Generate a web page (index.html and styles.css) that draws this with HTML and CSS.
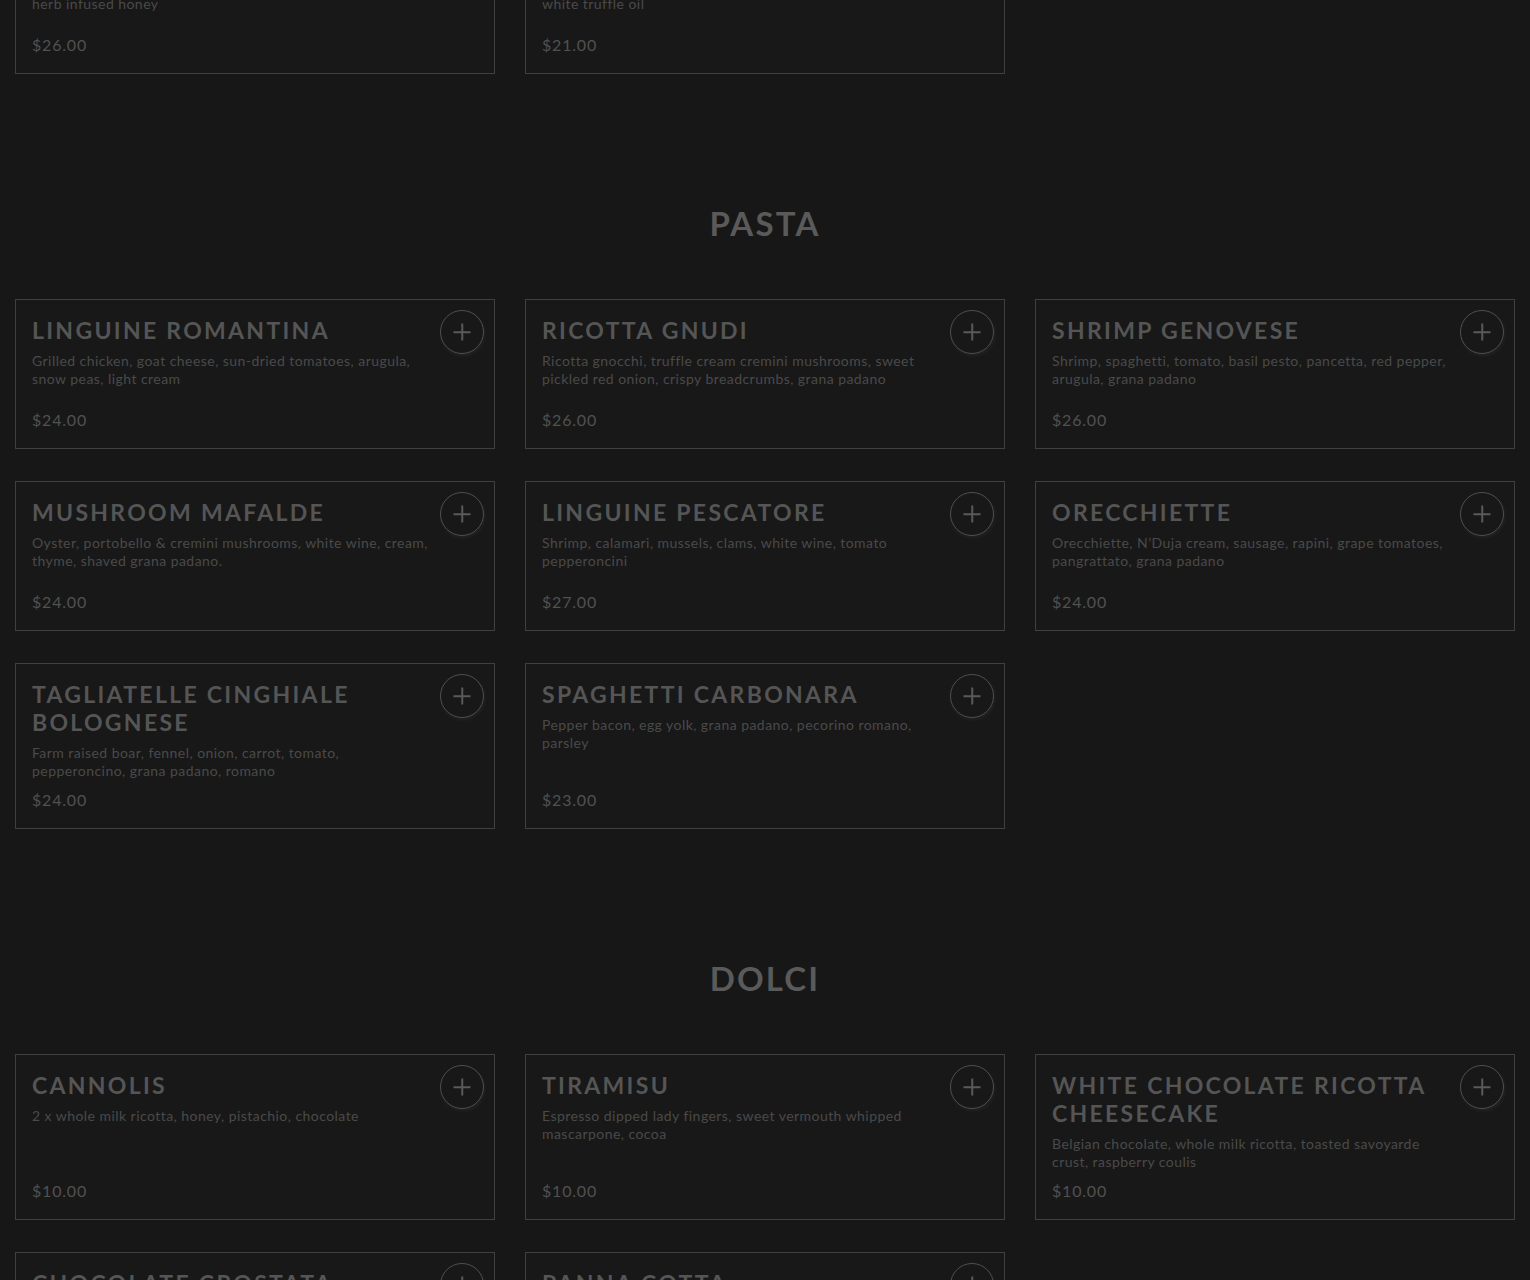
FILE: index.html
```html
<!DOCTYPE html>
<html>

<head>
    <meta charset="UTF-8">
    <title>Menu</title>
    <link rel="stylesheet" href="styles.css">
</head>

<body>
    <main class="menu">
        <!-- previous course, scrolled mostly out of view -->
        <section class="course course-cut">
            <div class="dish-grid">
                <div class="dish">
                    <div class="dish-body">
                        <h3 class="dish-name">Whipped Ricotta</h3>
                        <p class="dish-desc">Whipped ricotta, prosciutto, grilled sourdough,<br>herb infused honey</p>
                        <p class="dish-price">$26.00</p>
                    </div>
                    <button class="dish-add" aria-label="Add"></button>
                </div>
                <div class="dish">
                    <div class="dish-body">
                        <h3 class="dish-name">Truffle Fries</h3>
                        <p class="dish-desc">Hand cut fries, grana padano, parsley, aioli,<br>white truffle oil</p>
                        <p class="dish-price">$21.00</p>
                    </div>
                    <button class="dish-add" aria-label="Add"></button>
                </div>
            </div>
        </section>

        <section class="course">
            <h2 class="course-title">Pasta</h2>
            <div class="dish-grid">
                <div class="dish">
                    <div class="dish-body">
                        <h3 class="dish-name">Linguine Romantina</h3>
                        <p class="dish-desc">Grilled chicken, goat cheese, sun-dried tomatoes, arugula, snow peas, light cream</p>
                        <p class="dish-price">$24.00</p>
                    </div>
                    <button class="dish-add" aria-label="Add"></button>
                </div>
                <div class="dish">
                    <div class="dish-body">
                        <h3 class="dish-name">Ricotta Gnudi</h3>
                        <p class="dish-desc">Ricotta gnocchi, truffle cream cremini mushrooms, sweet pickled red onion, crispy breadcrumbs, grana padano</p>
                        <p class="dish-price">$26.00</p>
                    </div>
                    <button class="dish-add" aria-label="Add"></button>
                </div>
                <div class="dish">
                    <div class="dish-body">
                        <h3 class="dish-name">Shrimp Genovese</h3>
                        <p class="dish-desc">Shrimp, spaghetti, tomato, basil pesto, pancetta, red pepper, arugula, grana padano</p>
                        <p class="dish-price">$26.00</p>
                    </div>
                    <button class="dish-add" aria-label="Add"></button>
                </div>
                <div class="dish">
                    <div class="dish-body">
                        <h3 class="dish-name">Mushroom Mafalde</h3>
                        <p class="dish-desc">Oyster, portobello &amp; cremini mushrooms, white wine, cream, thyme, shaved grana padano.</p>
                        <p class="dish-price">$24.00</p>
                    </div>
                    <button class="dish-add" aria-label="Add"></button>
                </div>
                <div class="dish">
                    <div class="dish-body">
                        <h3 class="dish-name">Linguine Pescatore</h3>
                        <p class="dish-desc">Shrimp, calamari, mussels, clams, white wine, tomato pepperoncini</p>
                        <p class="dish-price">$27.00</p>
                    </div>
                    <button class="dish-add" aria-label="Add"></button>
                </div>
                <div class="dish">
                    <div class="dish-body">
                        <h3 class="dish-name">Orecchiette</h3>
                        <p class="dish-desc">Orecchiette, N’Duja cream, sausage, rapini, grape tomatoes, pangrattato, grana padano</p>
                        <p class="dish-price">$24.00</p>
                    </div>
                    <button class="dish-add" aria-label="Add"></button>
                </div>
                <div class="dish">
                    <div class="dish-body">
                        <h3 class="dish-name">Tagliatelle Cinghiale Bolognese</h3>
                        <p class="dish-desc">Farm raised boar, fennel, onion, carrot, tomato, pepperoncino, grana padano, romano</p>
                        <p class="dish-price">$24.00</p>
                    </div>
                    <button class="dish-add" aria-label="Add"></button>
                </div>
                <div class="dish">
                    <div class="dish-body">
                        <h3 class="dish-name">Spaghetti Carbonara</h3>
                        <p class="dish-desc">Pepper bacon, egg yolk, grana padano, pecorino romano, parsley</p>
                        <p class="dish-price">$23.00</p>
                    </div>
                    <button class="dish-add" aria-label="Add"></button>
                </div>
            </div>
        </section>

        <section class="course">
            <h2 class="course-title">Dolci</h2>
            <div class="dish-grid">
                <div class="dish">
                    <div class="dish-body">
                        <h3 class="dish-name">Cannolis</h3>
                        <p class="dish-desc">2 x whole milk ricotta, honey, pistachio, chocolate</p>
                        <p class="dish-price">$10.00</p>
                    </div>
                    <button class="dish-add" aria-label="Add"></button>
                </div>
                <div class="dish">
                    <div class="dish-body">
                        <h3 class="dish-name">Tiramisu</h3>
                        <p class="dish-desc">Espresso dipped lady fingers, sweet vermouth whipped mascarpone, cocoa</p>
                        <p class="dish-price">$10.00</p>
                    </div>
                    <button class="dish-add" aria-label="Add"></button>
                </div>
                <div class="dish">
                    <div class="dish-body">
                        <h3 class="dish-name">White Chocolate Ricotta Cheesecake</h3>
                        <p class="dish-desc">Belgian chocolate, whole milk ricotta, toasted savoyarde crust, raspberry coulis</p>
                        <p class="dish-price">$10.00</p>
                    </div>
                    <button class="dish-add" aria-label="Add"></button>
                </div>
                <div class="dish">
                    <div class="dish-body">
                        <h3 class="dish-name">Chocolate Crostata</h3>
                        <p class="dish-desc">Dark chocolate tart, shortbread crust, whipped cream</p>
                        <p class="dish-price">$10.00</p>
                    </div>
                    <button class="dish-add" aria-label="Add"></button>
                </div>
                <div class="dish">
                    <div class="dish-body">
                        <h3 class="dish-name">Panna Cotta</h3>
                        <p class="dish-desc">Vanilla bean cream, seasonal berries, mint</p>
                        <p class="dish-price">$10.00</p>
                    </div>
                    <button class="dish-add" aria-label="Add"></button>
                </div>
            </div>
        </section>
    </main>
</body>

</html>
```

FILE: styles.css
```css
* {
    margin: 0;
    padding: 0;
    box-sizing: border-box;
}

body {
    background-color: #171717;
    font-family: "Lato", "Noto Sans", sans-serif;
    overflow: hidden;
}

/* page is scrolled: the first course sits above the window */
.menu {
    padding: 0 15px;
    margin-top: -76px;
}

.course-title {
    margin: 129px 0 56px;
    font-size: 33px;
    line-height: 40px;
    font-weight: 700;
    letter-spacing: 2.2px;
    text-align: center;
    text-transform: uppercase;
    color: #5a5a5a;
}

.dish-grid {
    display: grid;
    grid-template-columns: repeat(3, 1fr);
    column-gap: 30px;
    row-gap: 32px;
}

.dish {
    display: flex;
    gap: 11px;
    min-height: 150px;
    padding: 16px 10px 17px 16px;
    border: 1px solid #404040;
    background-color: #181818;
}

.dish-body {
    flex: 1;
    display: flex;
    flex-direction: column;
}

.dish-name {
    font-size: 23px;
    line-height: 28px;
    font-weight: 700;
    letter-spacing: 2.3px;
    text-transform: uppercase;
    color: #555;
}

.dish-desc {
    margin-top: 8px;
    font-size: 14px;
    line-height: 18px;
    letter-spacing: 0.45px;
    color: #4a4a4a;
}

.dish-price {
    margin-top: auto;
    padding-top: 9px;
    font-size: 16px;
    line-height: 22px;
    letter-spacing: 0.8px;
    color: #515151;
}

.dish-add {
    flex: none;
    position: relative;
    width: 44px;
    height: 44px;
    margin-top: -6px;
    border: 1.5px solid #4f4f4f;
    border-radius: 50%;
    background: transparent;
    box-shadow: 1px 2px 4px rgba(255, 255, 255, 0.05);
    cursor: pointer;
}

.dish-add::before,
.dish-add::after {
    content: "";
    position: absolute;
    left: 50%;
    top: 50%;
    background-color: #5a5a5a;
    transform: translate(-50%, -50%);
}

.dish-add::before {
    width: 17px;
    height: 1.5px;
}

.dish-add::after {
    width: 1.5px;
    height: 17px;
}
```
